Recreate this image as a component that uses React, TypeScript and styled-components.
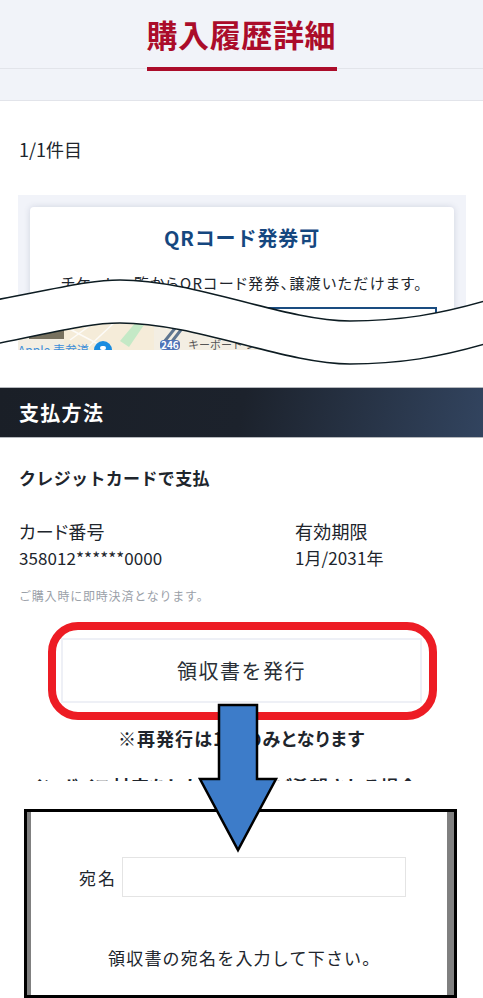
import React from 'react';
import styled, { createGlobalStyle } from 'styled-components';

const FONT = '"Noto Sans CJK JP", "Noto Sans", sans-serif';

const Global = createGlobalStyle`
  html, body { margin: 0; padding: 0; background: #fff; }
  * { box-sizing: border-box; }
`;

const Page = styled.div`
  position: relative;
  width: 483px;
  height: 998px;
  overflow: hidden;
  background: #fff;
  font-family: ${FONT};
  color: #20252c;
`;

const TopClip = styled.section`
  height: 350px;
  overflow: hidden;
`;

const Header = styled.header`
  height: 101px;
  background: #f1f3f9;
  border-bottom: 1px solid #e2e4ea;
`;

const TitleRow = styled.div`
  height: 69px;
  display: flex;
  justify-content: center;
  align-items: flex-start;
  border-bottom: 1px solid #e2e4ea;
`;

const Title = styled.h1`
  margin: 0;
  flex: none;
  width: 190px;
  height: 71px;
  padding-top: 14px;
  border-bottom: 4px solid #ab0c2a;
  color: #ab0c2a;
  font-size: 31px;
  line-height: 40px;
  font-weight: 700;
  letter-spacing: 0.6px;
  white-space: nowrap;
`;

const Count = styled.p`
  margin: 36px 0 34px 19px;
  font-size: 18px;
  line-height: 24px;
`;

const Panel = styled.div`
  margin: 0 17px 0 18px;
  height: 127px;
  padding: 12px 12px 0;
  background: #f1f3f9;
  overflow: hidden;
`;

const Card = styled.div`
  height: 130px;
  padding: 16px 17px 0;
  background: #fff;
  border-radius: 4px;
  box-shadow: 0 0 6px rgba(60, 80, 110, 0.18);
  text-align: center;
`;

const CardTitle = styled.h2`
  margin: 0;
  color: #15477f;
  font-size: 20px;
  line-height: 30px;
  font-weight: 700;
  letter-spacing: 0.9px;
`;

const CardText = styled.p`
  margin: 19px -10px 13px;
  font-size: 15px;
  line-height: 22px;
  letter-spacing: 1.3px;
  font-feature-settings: 'palt';
  white-space: nowrap;
`;

const OutlineButton = styled.div`
  height: 50px;
  border: 2px solid #1a4c80;
`;

const MapStrip = styled.svg`
  display: block;
  margin-left: 18px;
`;

const MapLabel = styled.text<{ $color: string; $size: number }>`
  font-family: ${FONT};
  font-size: ${(p) => p.$size}px;
  fill: ${(p) => p.$color};
`;

const MapBadgeText = styled.text`
  font-family: ${FONT};
  font-size: 10px;
  font-weight: 700;
  fill: #fff;
`;

const WaveOverlay = styled.svg`
  position: absolute;
  left: 0;
  top: 270px;
`;

const LowerClip = styled.section`
  margin-top: 37px;
  height: 394px;
  overflow: hidden;
`;

const SectionBar = styled.h2`
  margin: 0;
  height: 51px;
  padding-left: 19px;
  display: flex;
  align-items: center;
  color: #fff;
  font-size: 20px;
  font-weight: 700;
  letter-spacing: 1.3px;
  border-top: 1px solid #b5b8bd;
  border-bottom: 1px solid #b5b8bd;
  background: linear-gradient(100deg, #1a1f27 0%, #1c222c 50%, #32445f 100%);
`;

const PayBody = styled.div`
  padding: 28px 19px 0;
`;

const MethodName = styled.h3`
  margin: 0 0 29px;
  font-size: 17px;
  line-height: 24px;
  font-weight: 700;
  letter-spacing: 0.35px;
`;

const InfoGrid = styled.dl`
  margin: 0;
  display: grid;
  grid-template-columns: 276px 1fr;
`;

const InfoColumn = styled.div``;

const InfoLabel = styled.dt`
  font-size: 18px;
  line-height: 24px;
  letter-spacing: 0.2px;
  font-feature-settings: 'palt';
`;

const InfoValue = styled.dd`
  margin: 3px 0 0;
  font-size: 17px;
  line-height: 24px;
  letter-spacing: 0.08px;
`;

const Note = styled.p`
  margin: 17px 0 33px;
  color: #9aa0a8;
  font-size: 12px;
  line-height: 18px;
  letter-spacing: 0.8px;
`;

const ReceiptButton = styled.button`
  display: block;
  width: 361px;
  height: 65px;
  margin: 0 0 23px 42px;
  padding: 0;
  background: #fff;
  border: 2px solid #eef0f6;
  color: #2a2f36;
  font-family: ${FONT};
  font-size: 20px;
  letter-spacing: 1.5px;
`;

const ReissueNote = styled.p`
  margin: 0 0 24px;
  text-align: center;
  font-size: 18px;
  line-height: 24px;
  font-weight: 700;
  letter-spacing: 1.05px;
  font-feature-settings: 'palt';
`;

const InvoiceLine = styled.p`
  margin: 0 0 0 7px;
  font-size: 18px;
  line-height: 24px;
  font-weight: 700;
  letter-spacing: 0.6px;
  font-feature-settings: 'palt';
  white-space: nowrap;
`;

const HighlightFrame = styled.div`
  position: absolute;
  left: 48px;
  top: 622px;
  width: 389px;
  height: 98px;
  border: 8px solid #ed1c24;
  border-radius: 30px;
`;

const ArrowMark = styled.svg`
  position: absolute;
  left: 196px;
  top: 702px;
`;

const Inset = styled.section`
  width: 433px;
  height: 189px;
  margin: 28px 0 0 24px;
  border: 3px solid #000;
  background: #fff;
`;

const InsetInner = styled.div`
  height: 100%;
  padding: 45px 0 0 48px;
  border-left: 4px solid #808080;
  border-right: 7px solid #808080;
`;

const AddressRow = styled.div`
  display: flex;
  align-items: center;
  gap: 7px;
`;

const AddressLabel = styled.label`
  width: 36px;
  font-size: 17px;
  letter-spacing: 2px;
  white-space: nowrap;
`;

const AddressInput = styled.div`
  width: 284px;
  height: 40px;
  border: 1px solid #e4e4e4;
`;

const InsetText = styled.p`
  margin: 49px 0 0 29px;
  font-size: 17px;
  line-height: 24px;
  letter-spacing: 1.2px;
  white-space: nowrap;
`;

const wave1 = 'M-2 299.500 C60 288 90 280 120 280 C195 280 285 321 350 321 C400 321 440 314 485 301';
const wave2 = 'M-2 343.500 C60 331 90 323 120 323 C195 323 285 364 350 364 C400 364 440 357 485 344';
const band =
  wave1 + ' L485 344 C440 357 400 364 350 364 C285 364 195 323 120 323 C90 323 60 331 -2 343.500 Z';

export default function App() {
  return (
    <Page>
      <Global />
      <TopClip>
        <Header>
          <TitleRow>
            <Title>購入履歴詳細</Title>
          </TitleRow>
        </Header>
        <Count>1/1件目</Count>
        <Panel>
          <Card>
            <CardTitle>QRコード発券可</CardTitle>
            <CardText>チケット一覧からQRコード発券、譲渡いただけます。</CardText>
            <OutlineButton />
          </Card>
        </Panel>
        <MapStrip width="448" height="28" viewBox="18 322 448 28" aria-hidden="true">
          <rect x="18" y="322" width="448" height="28" fill="#f3eee3" />
          <rect x="64" y="322" width="90" height="28" fill="#f5ecd9" />
          <path d="M70 340 L95 322 M85 350 L115 322 M64 326 L100 345" stroke="#fff" strokeWidth="1.500" fill="none" opacity="0.8" />
          <path d="M120 341 L129 347 L146 322 L136 322 Z" fill="#c4e9c6" />
          <rect x="29" y="322" width="35" height="17" fill="#77715f" />
          <path d="M164 342 L180 322 M170 344 L187 322" stroke="#5f7690" strokeWidth="3" fill="none" />
          <rect x="160" y="340" width="20" height="10" rx="4" fill="#4f74b8" />
          <MapBadgeText x="161" y="349">246</MapBadgeText>
          <MapLabel $color="#3f8fd8" $size={12} x="18" y="355">Apple 表参道</MapLabel>
          <circle cx="103" cy="350" r="9" fill="#1a8ce0" />
          <rect x="100" y="346" width="6" height="4" rx="2" fill="#fff" />
          <MapLabel $color="#555" $size={11} x="188" y="349">キーボード ショ</MapLabel>
        </MapStrip>
      </TopClip>

      <LowerClip>
        <SectionBar>支払方法</SectionBar>
        <PayBody>
          <MethodName>クレジットカードで支払</MethodName>
          <InfoGrid>
            <InfoColumn>
              <InfoLabel>カード番号</InfoLabel>
              <InfoValue>358012******0000</InfoValue>
            </InfoColumn>
            <InfoColumn>
              <InfoLabel>有効期限</InfoLabel>
              <InfoValue>1月/2031年</InfoValue>
            </InfoColumn>
          </InfoGrid>
          <Note>ご購入時に即時決済となります。</Note>
          <ReceiptButton>領収書を発行</ReceiptButton>
          <ReissueNote>※再発行は1回のみとなります</ReissueNote>
          <InvoiceLine>インボイス対応をした領収書をご希望される場合</InvoiceLine>
        </PayBody>
      </LowerClip>

      <Inset>
        <InsetInner>
          <AddressRow>
            <AddressLabel>宛名</AddressLabel>
            <AddressInput />
          </AddressRow>
          <InsetText>領収書の宛名を入力して下さい。</InsetText>
        </InsetInner>
      </Inset>

      <WaveOverlay width="483" height="110" viewBox="0 270 483 110" aria-hidden="true">
        <path d={band} fill="#fff" />
        <path d={wave1} fill="none" stroke="#0d1c22" strokeWidth="1.500" />
        <path d={wave2} fill="none" stroke="#0d1c22" strokeWidth="1.500" />
      </WaveOverlay>
      <HighlightFrame />
      <ArrowMark width="84" height="152" viewBox="196 702 84 152" aria-hidden="true">
        <path
          d="M219 705 H257 V779 H276 L238 850 L200 779 H219 Z"
          fill="#3d7cc9"
          stroke="#000"
          strokeWidth="2.500"
          strokeLinejoin="miter"
        />
      </ArrowMark>
    </Page>
  );
}
